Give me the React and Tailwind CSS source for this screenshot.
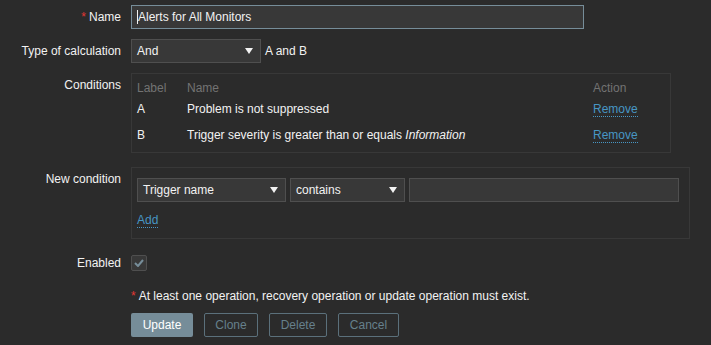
// App.jsx — action edit form (dark theme)

function Caret() {
  return (
    <svg width="8" height="6" viewBox="0 0 8 6" className="shrink-0">
      <path d="M0 0 L8 0 L4 6 Z" fill="#f2f2f2" />
    </svg>
  );
}

function Select({ value, width }) {
  return (
    <div
      className={`h-6 ${width} flex items-center justify-between pl-[5px] pr-[7px] bg-[#383838] border border-[#4f4f4f] box-border`}
    >
      <span>{value}</span>
      <Caret />
    </div>
  );
}

function Row({ label, required, top = "items-center", labelPad = "", children, className = "" }) {
  return (
    <div className={`flex ${top} ${className}`}>
      <div className={`w-[121px] shrink-0 text-right ${labelPad}`}>
        {required && <span className="text-[#e33734] mr-[3px]">*</span>}
        {label}
      </div>
      <div className="ml-[10px] flex-1">{children}</div>
    </div>
  );
}

function Link({ children }) {
  return (
    <span className="text-[#4796c4] border-b border-dotted border-[#4796c4] leading-[13px] inline-block">
      {children}
    </span>
  );
}

const buttons = [
  { name: "Clone", w: "w-[54px]" },
  { name: "Delete", w: "w-[58px]" },
  { name: "Cancel", w: "w-[61px]" },
];

export default function App() {
  const conditions = [
    { label: "A", name: <>Problem is not suppressed</> },
    {
      label: "B",
      name: (
        <>
          Trigger severity is greater than or equals <i>Information</i>
        </>
      ),
    },
  ];

  return (
    <div
      className="w-[711px] h-[345px] bg-[#2b2b2b] text-[#f2f2f2] text-[12px] overflow-hidden pt-[5px]"
      style={{ fontFamily: '"Liberation Sans", Arial, sans-serif' }}
    >
      <Row label="Name" required>
        <div className="w-[453px] h-6 bg-[#383838] border border-[#768d99] flex items-center pl-[5px]">
          <span className="w-px h-[14px] bg-[#f2f2f2]"></span>
          <span>Alerts for All Monitors</span>
        </div>
      </Row>

      <Row label="Type of calculation" className="mt-[10px]">
        <div className="flex items-center gap-[4px]">
          <Select value="And" width="w-[130px]" />
          <span>A and B</span>
        </div>
      </Row>

      <Row label="Conditions" top="items-start" labelPad="pt-[3px]" className="mt-[10px]">
        <div className="w-[540px] h-[80px] border border-[#383838] px-[5px] pt-[6px]">
          <div className="flex h-[16px] items-center text-[#737373]">
            <div className="w-[50px]">Label</div>
            <div className="flex-1">Name</div>
            <div className="w-[72px]">Action</div>
          </div>
          {conditions.map((c) => (
            <div key={c.label} className="flex items-center h-[26px]">
              <div className="w-[50px]">{c.label}</div>
              <div className="flex-1">{c.name}</div>
              <div className="w-[72px]">
                <Link>Remove</Link>
              </div>
            </div>
          ))}
        </div>
      </Row>

      <Row label="New condition" top="items-start" labelPad="pt-[3px]" className="mt-[14px]">
        <div className="w-[559px] h-[72px] border border-[#383838] pl-[5px] pt-[10px]">
          <div className="flex gap-[4px]">
            <Select value="Trigger name" width="w-[149px]" />
            <Select value="contains" width="w-[115px]" />
            <div className="w-[270px] h-6 bg-[#383838] border border-[#4f4f4f]"></div>
          </div>
          <div className="mt-[9px]">
            <Link>Add</Link>
          </div>
        </div>
      </Row>

      <Row label="Enabled" className="mt-[15px]">
        <div className="w-4 h-4 border border-[#4f4f4f] bg-[#383838] rounded-[2px] flex items-center justify-center">
          <svg width="10" height="8" viewBox="0 0 10 8">
            <path d="M1 4 L4 7 L9 1" stroke="#768d99" strokeWidth="2" fill="none" />
          </svg>
        </div>
      </Row>

      <Row label="" className="mt-[15px]">
        <div>
          <span className="text-[#e33734] mr-[3px]">*</span>
          At least one operation, recovery operation or update operation must exist.
        </div>
      </Row>

      <Row label="" className="mt-[8px]">
        <div className="flex gap-[11px]">
          <div className="h-6 w-[62px] flex items-center justify-center bg-[#768d99] text-white rounded-[2px]">
            Update
          </div>
          {buttons.map((b) => (
            <div
              key={b.name}
              className={`h-6 ${b.w} flex items-center justify-center border border-[#5b707b] text-[#66808c] rounded-[2px]`}
            >
              {b.name}
            </div>
          ))}
        </div>
      </Row>
    </div>
  );
}
